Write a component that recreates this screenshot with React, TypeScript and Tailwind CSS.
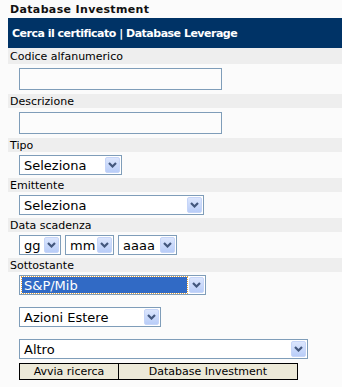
import React from "react";

const Chevron = () => (
  <svg width="9" height="6" viewBox="0 0 9 6" className="block">
    <polyline points="1,1 4.5,4.5 8,1" fill="none" stroke="#43577d" strokeWidth="2.2" />
  </svg>
);

const Label = ({ children, tall }: { children: React.ReactNode; tall?: boolean }) => (
  <div className={`ml-[8px] ${tall ? "h-[16px]" : "h-[14px]"} bg-[#eeeeee] flex items-center pl-[2px]`}>
    {children}
  </div>
);

type SelectProps = {
  value: string;
  width: string;
  focused?: boolean;
};

const FakeSelect = ({ value, width, focused }: SelectProps) => (
  <div className={`${width} h-[20px] border border-[#7f9db9] bg-white flex items-center text-[13px] pr-[1px]`}>
    <div className="flex-1 h-full flex items-center pl-[2px] pr-[2px] min-w-0">
      {focused ? (
        <div className="flex-1 h-[16px] bg-[#316ac5] text-white flex items-center pl-[2px] outline-1 outline-dotted outline-[#e0a040]">
          {value}
        </div>
      ) : (
        <span className="pl-[2px] whitespace-nowrap">{value}</span>
      )}
    </div>
    <div className="w-[15px] h-[16px] rounded-[2px] bg-gradient-to-b from-[#dce6fd] to-[#b9cdf8] border border-[#c6d5f8] flex items-center justify-center shrink-0">
      <Chevron />
    </div>
  </div>
);

export default function App() {
  return (
    <div className="w-[342px] min-h-[387px] bg-[#fbfbfb] text-[11px] leading-none text-black font-['DejaVu_Sans',Verdana,sans-serif]">
      <div className="h-[18px] flex items-center pl-[10px] font-bold text-[#111] tracking-[0.35px]">Database Investment</div>
      <div className="ml-[8px] h-[30px] bg-[#003366] flex items-center pl-[4px] font-bold text-white tracking-[-0.5px]">
        Cerca il certificato | Database Leverage
      </div>

      <Label tall>Codice alfanumerico</Label>
      <div className="pl-[19px] py-[4px]">
        <input className="block w-[203px] h-[22px] border border-[#7f9db9] bg-[#fcfcfc] outline-none" />
      </div>

      <Label>Descrizione</Label>
      <div className="pl-[19px] py-[4px]">
        <input className="block w-[203px] h-[22px] border border-[#7f9db9] bg-[#fcfcfc] outline-none" />
      </div>

      <Label>Tipo</Label>
      <div className="pl-[19px] py-[3px]">
        <FakeSelect value="Seleziona" width="w-[103px]" />
      </div>

      <Label>Emittente</Label>
      <div className="pl-[19px] py-[3px]">
        <FakeSelect value="Seleziona" width="w-[185px]" />
      </div>

      <Label>Data scadenza</Label>
      <div className="pl-[19px] py-[3px] flex gap-[4px]">
        <FakeSelect value="gg" width="w-[42px]" />
        <FakeSelect value="mm" width="w-[49px]" />
        <FakeSelect value="aaaa" width="w-[59px]" />
      </div>

      <Label>Sottostante</Label>
      <div className="pl-[19px] pt-[3px] flex flex-col gap-[12px]">
        <FakeSelect value="S&P/Mib" width="w-[187px]" focused />
        <FakeSelect value="Azioni Estere" width="w-[142px]" />
        <FakeSelect value="Altro" width="w-[289px]" />
      </div>

      <div className="pl-[19px] pt-[4px] flex">
        <button className="w-[100px] h-[17px] bg-[#ece9d8] border border-black flex items-center justify-center">
          Avvia ricerca
        </button>
        <button className="w-[179px] h-[17px] bg-[#ece9d8] border border-black border-l-0 flex items-center justify-center">
          Database Investment
        </button>
      </div>
    </div>
  );
}
